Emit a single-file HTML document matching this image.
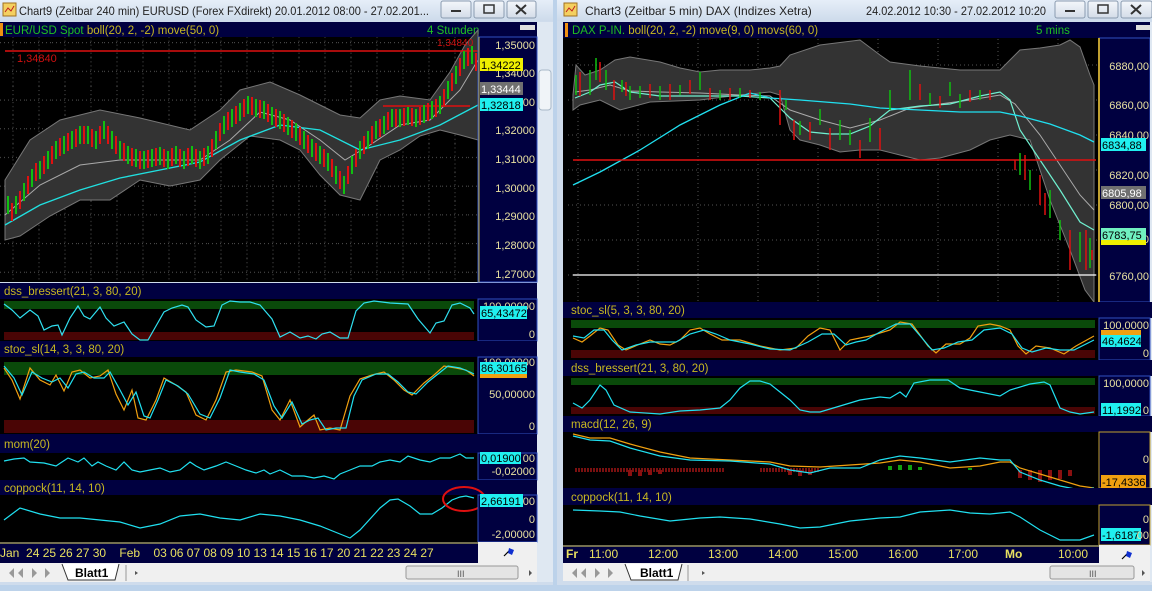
<!DOCTYPE html>
<html><head><meta charset="utf-8"><style>
html,body{margin:0;padding:0;background:#bcd2ea;overflow:hidden}
svg{display:block}
text{font-family:"Liberation Sans",sans-serif}
</style></head><body>
<svg width="1152" height="591" viewBox="0 0 1152 591" xmlns="http://www.w3.org/2000/svg">
<defs>
<linearGradient id="tb" x1="0" y1="0" x2="0" y2="1"><stop offset="0" stop-color="#e6eef8"/><stop offset="1" stop-color="#cddbeb"/></linearGradient>
<linearGradient id="btn" x1="0" y1="0" x2="0" y2="1"><stop offset="0" stop-color="#f4f7fb"/><stop offset="1" stop-color="#d3dce8"/></linearGradient>
<pattern id="gridL" x="0" y="0" width="26" height="28.7" patternUnits="userSpaceOnUse"><path d="M13 0V28.7M0 14H26" stroke="#555" stroke-width="1" stroke-dasharray="1 3" fill="none"/></pattern>
<pattern id="gridR" x="0" y="0" width="60" height="35" patternUnits="userSpaceOnUse"><path d="M38 0V35M0 30H60" stroke="#555" stroke-width="1" stroke-dasharray="1 3" fill="none"/></pattern>
</defs>
<rect width="1152" height="591" fill="#bcd2ea"/>
<rect x="0" y="0" width="553" height="585" fill="#cfdcec"/>
<rect x="0" y="0" width="553" height="21" fill="url(#tb)"/>
<rect x="3" y="3" width="13" height="13" fill="#f4d060" stroke="#a07020"/><path d="M5 12l3-4 3 3 3-5" stroke="#c02020" fill="none"/>
<text x="19" y="15" font-size="12" fill="#222" textLength="410" lengthAdjust="spacingAndGlyphs">Chart9 (Zeitbar 240 min)  EURUSD (Forex FXdirekt) 20.01.2012 08:00 - 27.02.201...</text>
<rect x="441" y="1" width="30" height="17" rx="2" fill="url(#btn)" stroke="#8a9bb0"/><rect x="451" y="10" width="10" height="2" fill="#333"/>
<rect x="474" y="1" width="30" height="17" rx="2" fill="url(#btn)" stroke="#8a9bb0"/><rect x="484" y="5" width="10" height="8" fill="none" stroke="#333" stroke-width="1.5"/>
<rect x="507" y="1" width="29" height="17" rx="2" fill="url(#btn)" stroke="#8a9bb0"/><path d="M516 5l10 9M526 5l-10 9" stroke="#333" stroke-width="2"/>
<rect x="537" y="22" width="16" height="560" fill="#dfe8f2"/>
<rect x="539" y="70" width="12" height="40" rx="3" fill="#f0f4f8" stroke="#a8b8c8"/>

<rect x="0" y="22" width="537" height="15" fill="#000040"/>
<rect x="0" y="23" width="3" height="13" fill="#f09010"/>
<text x="5" y="34" font-size="11.5" fill="#20c020">EUR/USD Spot <tspan fill="#c8b820">boll(20, 2, -2) move(50, 0)</tspan></text>
<text x="427" y="34" font-size="11.5" fill="#20c020">4 Stunden</text>
<rect x="520" y="25" width="15" height="5" fill="#ddd"/>

<rect x="0" y="37" width="478" height="245" fill="#000"/>
<rect x="0" y="37" width="478" height="245" fill="url(#gridL)"/>
<polygon points="5,180 30,140 60,120 100,110 140,118 190,130 220,110 240,90 270,82 300,95 320,105 340,115 360,118 380,100 400,96 430,100 450,72 465,45 478,30 478,140 460,135 440,130 420,136 400,150 380,160 360,200 340,195 320,175 300,150 280,140 250,136 220,160 200,180 170,186 140,180 110,200 80,200 50,216 20,236 5,240" fill="#333" stroke="#777" stroke-width="1"/>
<polyline points="5,215 40,185 80,165 120,160 160,160 200,160 230,140 260,112 290,120 320,140 345,160 370,145 400,125 430,120 460,90 478,60" fill="none" stroke="#aaa" stroke-width="1"/>
<polyline points="5,225 40,205 80,190 120,178 160,170 200,162 240,140 280,125 320,130 360,150 400,140 440,125 478,105" fill="none" stroke="#20e0e0" stroke-width="1.3"/>
<line x1="5" y1="51" x2="478" y2="51" stroke="#e01010" stroke-width="1.5"/>
<line x1="383" y1="106" x2="470" y2="106" stroke="#e01010" stroke-width="1.5"/>
<text x="17" y="62" font-size="11" fill="#d01010">1,34840</text>
<text x="437" y="46" font-size="10" fill="#d01010">1,34840</text>
<path d="M8 196v18M16 196v18M24 183v18M32 169v18M40 161v18M48 151v18M56 141v18M64 136v18M72 131v18M80 126v18M88 126v18M96 131v18M104 121v18M112 131v18M120 141v18M128 146v18M136 149v18M144 151v18M152 149v18M160 147v18M168 151v18M176 146v18M184 151v18M192 146v18M200 151v18M208 146v18M216 131v18M224 116v18M232 109v18M240 103v18M248 96v18M256 99v18M264 101v18M272 107v18M280 111v18M288 117v18M296 123v18M304 131v18M312 139v18M320 146v18M328 153v18M336 166v18M344 176v18M352 156v18M360 141v18M368 131v18M376 121v18M384 116v18M392 109v18M400 109v18M408 107v18M416 109v18M424 105v18M432 101v18M440 96v18M448 81v18M456 66v18M464 51v18M472 46v18" stroke="#10c010" stroke-width="2"/>
<path d="M12 203v18M20 191v18M28 176v18M36 163v18M44 156v18M52 146v18M60 138v18M68 133v18M76 129v18M84 126v18M92 129v18M100 126v18M108 126v18M116 136v18M124 143v18M132 148v18M140 151v18M148 150v18M156 148v18M164 149v18M172 148v18M180 149v18M188 148v18M196 149v18M204 148v18M212 139v18M220 123v18M228 112v18M236 106v18M244 99v18M252 97v18M260 100v18M268 104v18M276 109v18M284 114v18M292 120v18M300 127v18M308 135v18M316 143v18M324 149v18M332 159v18M340 171v18M348 166v18M356 149v18M364 136v18M372 126v18M380 119v18M388 112v18M396 109v18M404 108v18M412 108v18M420 107v18M428 103v18M436 99v18M444 89v18M452 73v18M460 58v18M468 48v18M476 53v18" stroke="#e01010" stroke-width="2"/>
<rect x="478" y="37" width="59" height="245" fill="#000040" stroke="#3050c0"/>
<line x1="479" y1="37" x2="479" y2="282" stroke="#c0b040"/>
<g font-size="11" fill="#e8e0a0" text-anchor="end">
<text x="535" y="49">1,35000</text><text x="535" y="77">1,34000</text><text x="535" y="106">1,33000</text><text x="535" y="134">1,32000</text><text x="535" y="163">1,31000</text><text x="535" y="192">1,30000</text><text x="535" y="220">1,29000</text><text x="535" y="249">1,28000</text><text x="535" y="278">1,27000</text></g>
<rect x="480" y="58" width="43" height="13" fill="#f0f000"/><text x="481" y="69" font-size="11" fill="#000">1,34222</text>
<rect x="480" y="82" width="43" height="13" fill="#707070"/><text x="481" y="93" font-size="11" fill="#fff">1,33444</text>
<rect x="480" y="98" width="43" height="13" fill="#20f0f0"/><text x="481" y="109" font-size="11" fill="#000">1,32818</text>

<rect x="0" y="283" width="537" height="16" fill="#000040"/>
<text x="4" y="295" font-size="11.5" fill="#c8b820">dss_bressert(21, 3, 80, 20)</text>
<rect x="0" y="299" width="478" height="42" fill="#000"/>
<rect x="4" y="301" width="470" height="8" fill="#0a4a0a"/>
<rect x="4" y="332" width="470" height="8" fill="#4a0505"/>
<polyline points="4,304 12,310 20,318 30,310 38,316 44,330 52,326 58,325 62,335 70,318 78,306 84,316 90,319 100,307 106,318 114,326 124,322 132,334 140,340 148,340 156,326 164,312 172,308 182,305 188,307 196,320 206,327 214,326 222,305 230,301 240,302 250,302 260,305 272,319 280,337 290,332 300,338 308,336 316,339 322,334 330,332 340,338 348,338 356,311 364,303 374,301 390,303 408,304 418,319 430,333 436,323 444,321 452,305 460,303 470,308 474,314" fill="none" stroke="#30e0f0" stroke-width="1.2"/>
<rect x="478" y="299" width="59" height="42" fill="#000040" stroke="#3050c0"/>
<text x="535" y="310" font-size="11" fill="#e8e0a0" text-anchor="end">100,00000</text>
<text x="535" y="338" font-size="11" fill="#e8e0a0" text-anchor="end">0</text>
<rect x="480" y="306" width="47" height="13" fill="#20f0f0"/><text x="481" y="317" font-size="11" fill="#000">65,43472</text>

<rect x="0" y="341" width="537" height="16" fill="#000040"/>
<text x="4" y="353" font-size="11.5" fill="#c8b820">stoc_sl(14, 3, 3, 80, 20)</text>
<rect x="0" y="357" width="478" height="77" fill="#000"/>
<rect x="4" y="362" width="470" height="13" fill="#0a4a0a"/>
<rect x="4" y="420" width="470" height="13" fill="#4a0505"/>
<polyline points="4,368 12,380 20,399 30,368 40,380 50,385 56,375 64,391 72,372 80,370 90,378 100,376 108,370 116,394 124,410 132,390 138,418 146,420 156,400 164,378 176,385 186,392 196,415 206,420 216,400 226,372 236,370 252,372 262,376 272,410 280,420 290,400 300,427 308,420 314,415 320,430 330,428 340,430 350,396 360,379 372,375 384,372 394,380 404,390 412,395 424,383 434,375 444,366 456,368 466,370 474,376" fill="none" stroke="#f0a010" stroke-width="1.2"/>
<polyline points="4,366 14,378 22,395 32,372 42,378 52,382 60,378 68,388 76,374 84,372 94,378 104,378 110,372 120,390 128,405 136,392 144,416 150,418 158,400 166,380 178,386 188,394 200,414 210,418 220,398 230,370 240,372 254,374 264,380 274,406 282,418 292,402 302,424 310,420 318,418 326,430 336,428 346,428 354,396 362,380 376,374 388,374 398,382 408,392 416,394 428,382 438,374 448,366 460,368 470,372 474,374" fill="none" stroke="#20e0f0" stroke-width="1.2"/>
<rect x="478" y="357" width="59" height="77" fill="#000040" stroke="#3050c0"/>
<text x="535" y="366" font-size="11" fill="#e8e0a0" text-anchor="end">100,00000</text>
<text x="535" y="398" font-size="11" fill="#e8e0a0" text-anchor="end">50,00000</text>
<text x="535" y="430" font-size="11" fill="#e8e0a0" text-anchor="end">0</text>
<rect x="480" y="374" width="47" height="4" fill="#f0a010"/>
<rect x="480" y="362" width="47" height="12" fill="#20f0f0"/><text x="481" y="372" font-size="11" fill="#000">86,30165</text>

<rect x="0" y="434" width="537" height="19" fill="#000040"/>
<text x="4" y="448" font-size="11.5" fill="#c8b820">mom(20)</text>
<rect x="0" y="453" width="478" height="27" fill="#000"/>
<polyline points="4,461 14,459 24,458 30,462 44,463 56,466 62,462 68,458 78,462 84,458 92,466 98,462 106,466 116,470 124,462 132,470 140,472 150,470 160,468 170,472 180,470 190,462 196,466 204,470 216,466 226,462 236,466 246,470 256,473 264,470 270,474 280,470 292,476 304,476 314,478 324,476 334,479 340,474 350,470 360,466 372,466 380,462 390,460 400,462 408,456 420,460 430,462 440,458 450,458 460,454 466,458 474,458" fill="none" stroke="#20e0f0" stroke-width="1.2"/>
<rect x="478" y="453" width="59" height="27" fill="#000040" stroke="#3050c0"/>
<text x="535" y="475" font-size="11" fill="#e8e0a0" text-anchor="end">-0,02000</text>
<rect x="480" y="452" width="41" height="12" fill="#20f0f0"/><text x="481" y="462" font-size="11" fill="#000">0,01900</text>
<text x="535" y="462" font-size="11" fill="#e8e0a0" text-anchor="end">00</text>

<rect x="0" y="480" width="537" height="15" fill="#000040"/>
<text x="4" y="492" font-size="11.5" fill="#c8b820">coppock(11, 14, 10)</text>
<rect x="0" y="495" width="478" height="47" fill="#000"/>
<polyline points="4,520 20,508 40,514 60,518 80,518 100,520 120,522 140,528 160,524 180,516 200,514 220,518 240,520 260,514 280,516 300,520 320,526 340,534 350,538 360,530 380,508 390,500 398,499 410,506 420,514 432,514 442,508 452,500 460,497 466,496 474,498" fill="none" stroke="#20e0f0" stroke-width="1.2"/>
<ellipse cx="464" cy="499" rx="21" ry="12" fill="none" stroke="#e01010" stroke-width="2"/>
<rect x="478" y="495" width="59" height="47" fill="#000040" stroke="#3050c0"/>
<rect x="480" y="494" width="43" height="13" fill="#20f0f0"/><text x="481" y="505" font-size="11" fill="#000">2,66191</text>
<text x="535" y="505" font-size="11" fill="#e8e0a0" text-anchor="end">00</text>
<text x="535" y="523" font-size="11" fill="#e8e0a0" text-anchor="end">0</text>
<text x="535" y="538" font-size="11" fill="#e8e0a0" text-anchor="end">-2,00000</text>

<rect x="0" y="542" width="478" height="21" fill="#000040"/>
<line x1="0" y1="543" x2="478" y2="543" stroke="#e8e060"/>
<text x="0" y="557" font-size="12" fill="#e8e060" xml:space="preserve">Jan  24 25 26 27 30    Feb    03 06 07 08 09 10 13 14 15 16 17 20 21 22 23 24 27</text>
<rect x="478" y="542" width="59" height="21" fill="#f0f0f0"/>
<path d="M504 556l6-6" stroke="#000" stroke-width="1.2"/><path d="M509 548l5 2 -2 5 -4-2z" fill="#1030d0"/>
<rect x="0" y="563" width="537" height="19" fill="#f0f0f0"/>
<g fill="#999"><path d="M6 567v12M9 573l5-5v10z"/><path d="M18 573l5-5v10z"/><path d="M32 568l5 5 -5 5z"/><path d="M45 568l5 5 -5 5zM52 567v12"/></g>
<path d="M62 564l6 16h47l4-16" fill="#fff" stroke="#333"/>
<text x="75" y="577" font-size="12" font-weight="bold" fill="#000">Blatt1</text>
<line x1="126" y1="565" x2="126" y2="581" stroke="#999"/>
<path d="M138 573l-3-2v4z" fill="#555"/>
<rect x="406" y="566" width="112" height="13" rx="2" fill="#e4e4e4" stroke="#999"/>
<text x="457" y="577" font-size="9" fill="#555">III</text>
<path d="M529 570l3 3-3 3z" fill="#555"/>

<rect x="557" y="0" width="595" height="585" fill="#cfdcec"/>
<rect x="557" y="0" width="595" height="21" fill="url(#tb)"/>
<rect x="564" y="3" width="13" height="13" fill="#f4d060" stroke="#a07020"/><path d="M566 12l3-4 3 3 3-5" stroke="#c02020" fill="none"/>
<text x="585" y="15" font-size="12" fill="#222">Chart3 (Zeitbar 5 min)  DAX (Indizes Xetra)</text>
<text x="866" y="15" font-size="12" fill="#222" textLength="180" lengthAdjust="spacingAndGlyphs">24.02.2012 10:30 - 27.02.2012 10:20</text>
<rect x="1055" y="1" width="30" height="17" rx="2" fill="url(#btn)" stroke="#8a9bb0"/><rect x="1065" y="10" width="10" height="2" fill="#333"/>
<rect x="1088" y="1" width="30" height="17" rx="2" fill="url(#btn)" stroke="#8a9bb0"/><rect x="1098" y="5" width="10" height="8" fill="none" stroke="#333" stroke-width="1.5"/>
<rect x="1121" y="1" width="31" height="17" rx="2" fill="url(#btn)" stroke="#8a9bb0"/><path d="M1131 5l10 9M1141 5l-10 9" stroke="#333" stroke-width="2"/>

<rect x="563" y="22" width="589" height="16" fill="#000040"/>
<rect x="565" y="23" width="3" height="14" fill="#f09010"/>
<text x="572" y="34" font-size="11.5" fill="#20c020">DAX P-IN. <tspan fill="#c8b820">boll(20, 2, -2) move(9, 0) movs(60, 0)</tspan></text>
<text x="1036" y="34" font-size="11.5" fill="#20c020">5 mins</text>
<rect x="1136" y="25" width="14" height="5" fill="#ddd"/>

<rect x="563" y="38" width="536" height="264" fill="#000"/>
<rect x="566" y="38" width="533" height="264" fill="url(#gridR)"/>
<polygon points="573,95 576,65 585,75 600,70 615,60 630,57 660,62 680,68 700,72 720,70 750,70 770,68 780,66 790,55 820,45 860,40 880,55 890,62 920,66 960,70 1000,70 1010,60 1020,50 1040,48 1060,45 1070,40 1080,47 1090,75 1094,85 1094,302 1085,290 1070,250 1050,200 1040,170 1030,140 1010,135 990,140 970,150 940,158 920,160 900,155 880,150 860,150 840,152 820,145 800,140 790,130 780,95 770,92 740,95 700,100 650,102 620,110 600,100 580,105 573,110" fill="#333" stroke="#777"/>
<polyline points="575,92 590,90 610,85 630,91 660,92 700,93 740,95 770,96 790,110 820,120 850,128 880,120 910,108 940,104 970,100 1000,95 1015,104 1040,135 1060,165 1080,195 1094,210" fill="none" stroke="#aaa" stroke-width="1"/>
<polyline points="575,98 590,92 600,85 615,82 630,92 660,96 700,96 740,96 770,98 790,118 810,132 830,134 850,134 870,126 890,110 920,106 950,104 980,96 1000,92 1010,100 1020,130 1040,160 1060,190 1080,222 1094,230" fill="none" stroke="#70f0d0" stroke-width="1.2"/>
<polyline points="573,185 600,172 640,150 680,125 720,105 750,93 770,98 800,100 850,104 880,108 920,110 960,112 1000,112 1020,116 1050,124 1080,135 1094,142" fill="none" stroke="#20e0f0" stroke-width="1.3"/>
<line x1="573" y1="160" x2="1096" y2="160" stroke="#e01010" stroke-width="1.5"/>
<line x1="573" y1="275" x2="1096" y2="275" stroke="#fff" stroke-width="1.3"/>
<path d="M576 95v-20M590 95v-25M596 80v-22M606 90v-20M622 92v-12M630 100v-14M640 98v-12M660 100v-14M680 95v-10M700 90v-18M720 100v-10M740 98v-10M760 100v-8M786 110v-10M800 135v-14M820 125v-16M840 140v-20M850 145v-15M870 142v-24M890 110v-20M910 100v-30M930 105v-12M950 96v-14M960 108v-14M980 100v-10M1020 175v-22M1030 190v-20M1050 218v-28M1060 240v-20M1080 262v-30M1090 268v-30" stroke="#10c010" stroke-width="1.5"/>
<path d="M580 96v-24M600 82v-20M614 100v-20M626 96v-14M650 98v-14M670 100v-16M690 94v-14M710 100v-12M730 100v-12M750 98v-8M780 125v-35M794 140v-20M810 140v-18M830 150v-22M860 158v-18M880 150v-22M920 100v-16M940 108v-12M970 102v-12M990 100v-10M1015 170v-10M1025 180v-25M1040 205v-30M1045 215v-22M1070 270v-40M1086 270v-40M1092 260v-10" stroke="#e01010" stroke-width="1.5"/>
<rect x="1099" y="38" width="51" height="264" fill="#000040" stroke="#3050c0"/>
<line x1="1099" y1="38" x2="1099" y2="302" stroke="#c0a030" stroke-width="2"/>
<g font-size="11" fill="#e8e0a0" text-anchor="end">
<text x="1149" y="70">6880,00</text><text x="1149" y="109">6860,00</text><text x="1149" y="139">6840,00</text><text x="1149" y="179">6820,00</text><text x="1149" y="209">6800,00</text><text x="1149" y="280">6760,00</text><text x="1149" y="243">00</text></g>
<rect x="1101" y="138" width="45" height="13" fill="#20f0f0"/><text x="1102" y="149" font-size="11" fill="#000">6834,88</text>
<rect x="1101" y="186" width="45" height="13" fill="#707070"/><text x="1102" y="197" font-size="11" fill="#fff">6805,98</text>
<rect x="1101" y="238" width="45" height="7" fill="#f0f000"/>
<rect x="1101" y="228" width="45" height="12" fill="#70f0c0"/><text x="1102" y="239" font-size="11" fill="#000">6783,75</text>
<rect x="1150" y="22" width="2" height="560" fill="#dfe8f2"/>

<rect x="563" y="302" width="589" height="16" fill="#000040"/>
<text x="571" y="314" font-size="11.5" fill="#c8b820">stoc_sl(5, 3, 3, 80, 20)</text>
<rect x="563" y="318" width="536" height="42" fill="#000"/>
<rect x="571" y="320" width="524" height="8" fill="#0a4a0a"/>
<rect x="571" y="350" width="524" height="8" fill="#4a0505"/>
<polyline points="573,338 582,342 590,336 600,328 608,330 618,345 626,350 640,344 650,340 660,344 670,345 680,340 690,330 700,328 710,334 722,340 740,340 760,346 780,350 796,348 808,336 820,328 830,330 840,350 850,340 860,338 870,336 890,330 900,322 912,324 928,346 936,353 946,344 960,344 970,338 978,326 990,324 1000,326 1010,330 1018,346 1026,354 1036,346 1050,348 1064,354 1076,346 1094,336" fill="none" stroke="#f0a010" stroke-width="1.2"/>
<polyline points="573,336 584,338 594,330 604,330 612,340 622,350 636,345 650,342 662,342 676,342 690,334 704,330 716,334 730,340 750,344 770,349 790,350 808,342 822,334 834,334 846,345 856,342 866,340 880,332 896,324 910,324 922,338 932,350 944,348 958,342 972,340 984,330 1000,328 1012,334 1022,348 1032,352 1046,348 1060,350 1074,350 1094,340" fill="none" stroke="#20e0f0" stroke-width="1.2"/>
<rect x="1099" y="318" width="51" height="42" fill="#000040" stroke="#3050c0"/>
<text x="1149" y="329" font-size="11" fill="#e8e0a0" text-anchor="end">100,0000</text>
<text x="1149" y="357" font-size="11" fill="#e8e0a0" text-anchor="end">0</text>
<rect x="1101" y="330" width="40" height="5" fill="#f0a010"/>
<rect x="1101" y="335" width="40" height="12" fill="#20f0f0"/><text x="1102" y="345" font-size="11" fill="#000">46,4624</text>

<rect x="563" y="360" width="589" height="16" fill="#000040"/>
<text x="571" y="372" font-size="11.5" fill="#c8b820">dss_bressert(21, 3, 80, 20)</text>
<rect x="563" y="376" width="536" height="40" fill="#000"/>
<rect x="571" y="378" width="524" height="7" fill="#0a4a0a"/>
<rect x="571" y="407" width="524" height="7" fill="#4a0505"/>
<polyline points="573,403 582,408 590,400 600,385 606,390 614,405 630,412 660,414 680,411 700,410 720,408 730,400 740,388 750,381 760,381 770,384 780,392 790,400 800,410 810,412 820,412 840,406 860,400 880,397 890,398 900,392 906,397 914,383 930,380 948,380 960,388 980,392 1000,396 1010,390 1030,384 1044,382 1050,385 1060,408 1070,412 1080,414 1094,412" fill="none" stroke="#20e0f0" stroke-width="1.2"/>
<rect x="1099" y="376" width="51" height="40" fill="#000040" stroke="#3050c0"/>
<text x="1149" y="387" font-size="11" fill="#e8e0a0" text-anchor="end">100,0000</text>
<rect x="1101" y="403" width="40" height="13" fill="#20f0f0"/><text x="1102" y="414" font-size="11" fill="#000">11,1992</text>
<text x="1149" y="414" font-size="11" fill="#e8e0a0" text-anchor="end">0</text>

<rect x="563" y="416" width="589" height="16" fill="#000040"/>
<text x="571" y="428" font-size="11.5" fill="#c8b820">macd(12, 26, 9)</text>
<rect x="563" y="432" width="536" height="56" fill="#000"/>
<path d="M575 470h150M760 470h60" stroke="#7a1010" stroke-width="4" stroke-dasharray="2 1"/>
<path d="M630 470v6M640 470v6M650 470v5M660 470v4M790 470v5M800 470v6M810 470v5M1020 470v8M1030 470v10M1040 470v12M1050 470v10M1060 470v9M1070 470v6" stroke="#8a1010" stroke-width="4"/>
<path d="M890 470v-4M900 470v-5M910 470v-5M920 470v-3M970 470v-2" stroke="#10a010" stroke-width="4"/>
<polyline points="573,434 590,438 610,438 630,444 660,452 690,458 730,460 770,462 790,466 820,467 850,465 880,463 900,460 920,462 950,468 980,466 1000,462 1010,462 1020,468 1040,474 1060,480 1080,486 1094,488" fill="none" stroke="#f0a010" stroke-width="1.2"/>
<polyline points="573,436 590,440 610,441 630,448 660,456 690,460 730,461 770,464 790,470 810,473 830,468 860,468 880,460 900,456 920,458 950,462 980,458 1000,460 1010,460 1020,472 1040,480 1060,486 1080,490 1094,488" fill="none" stroke="#20e0f0" stroke-width="1.2"/>
<rect x="1099" y="432" width="51" height="56" fill="#000040" stroke="#c0a030"/>
<text x="1149" y="463" font-size="11" fill="#e8e0a0" text-anchor="end">0</text>
<rect x="1101" y="475" width="45" height="13" fill="#f0a010"/><text x="1102" y="486" font-size="11" fill="#000">-17,4336</text>

<rect x="563" y="488" width="589" height="17" fill="#000040"/>
<text x="571" y="501" font-size="11.5" fill="#c8b820">coppock(11, 14, 10)</text>
<rect x="563" y="505" width="536" height="40" fill="#000"/>
<polyline points="573,510 600,511 620,512 640,516 670,521 700,518 720,517 750,519 780,524 800,528 820,527 850,521 880,518 900,517 920,512 950,510 970,513 990,514 1010,512 1020,517 1040,530 1060,540 1080,540 1094,535" fill="none" stroke="#20e0f0" stroke-width="1.2"/>
<rect x="1099" y="505" width="51" height="40" fill="#000040" stroke="#c0a030"/>
<text x="1149" y="523" font-size="11" fill="#e8e0a0" text-anchor="end">0</text>
<rect x="1101" y="528" width="40" height="13" fill="#20f0f0"/><text x="1102" y="539" font-size="11" fill="#000">-1,6187</text>
<text x="1149" y="539" font-size="11" fill="#e8e0a0" text-anchor="end">00</text>

<rect x="563" y="545" width="536" height="18" fill="#000040"/>
<line x1="563" y1="546" x2="1099" y2="546" stroke="#e8e060"/>
<g font-size="12" fill="#e8e060"><text x="566" y="558" font-weight="bold">Fr</text><text x="589" y="558">11:00</text><text x="648" y="558">12:00</text><text x="708" y="558">13:00</text><text x="768" y="558">14:00</text><text x="828" y="558">15:00</text><text x="888" y="558">16:00</text><text x="948" y="558">17:00</text><text x="1005" y="558" font-weight="bold">Mo</text><text x="1058" y="558">10:00</text></g>
<rect x="1099" y="545" width="51" height="18" fill="#f0f0f0"/>
<path d="M1122 559l6-6" stroke="#000" stroke-width="1.2"/><path d="M1127 551l5 2 -2 5 -4-2z" fill="#1030d0"/>
<rect x="563" y="563" width="587" height="18" fill="#f0f0f0"/>
<g fill="#999"><path d="M569 567v12M572 573l5-5v10z"/><path d="M581 573l5-5v10z"/><path d="M595 568l5 5 -5 5z"/><path d="M608 568l5 5 -5 5zM615 567v12"/></g>
<path d="M625 564l6 16h47l4-16" fill="#fff" stroke="#333"/>
<text x="640" y="577" font-size="12" font-weight="bold" fill="#000">Blatt1</text>
<line x1="688" y1="565" x2="688" y2="581" stroke="#999"/>
<path d="M705 573l-3-2v4z" fill="#555"/>
<rect x="1050" y="566" width="84" height="13" rx="2" fill="#e4e4e4" stroke="#999"/>
<text x="1089" y="577" font-size="9" fill="#555">III</text>
<path d="M1142 570l3 3-3 3z" fill="#555"/>
</svg>
</body></html>
